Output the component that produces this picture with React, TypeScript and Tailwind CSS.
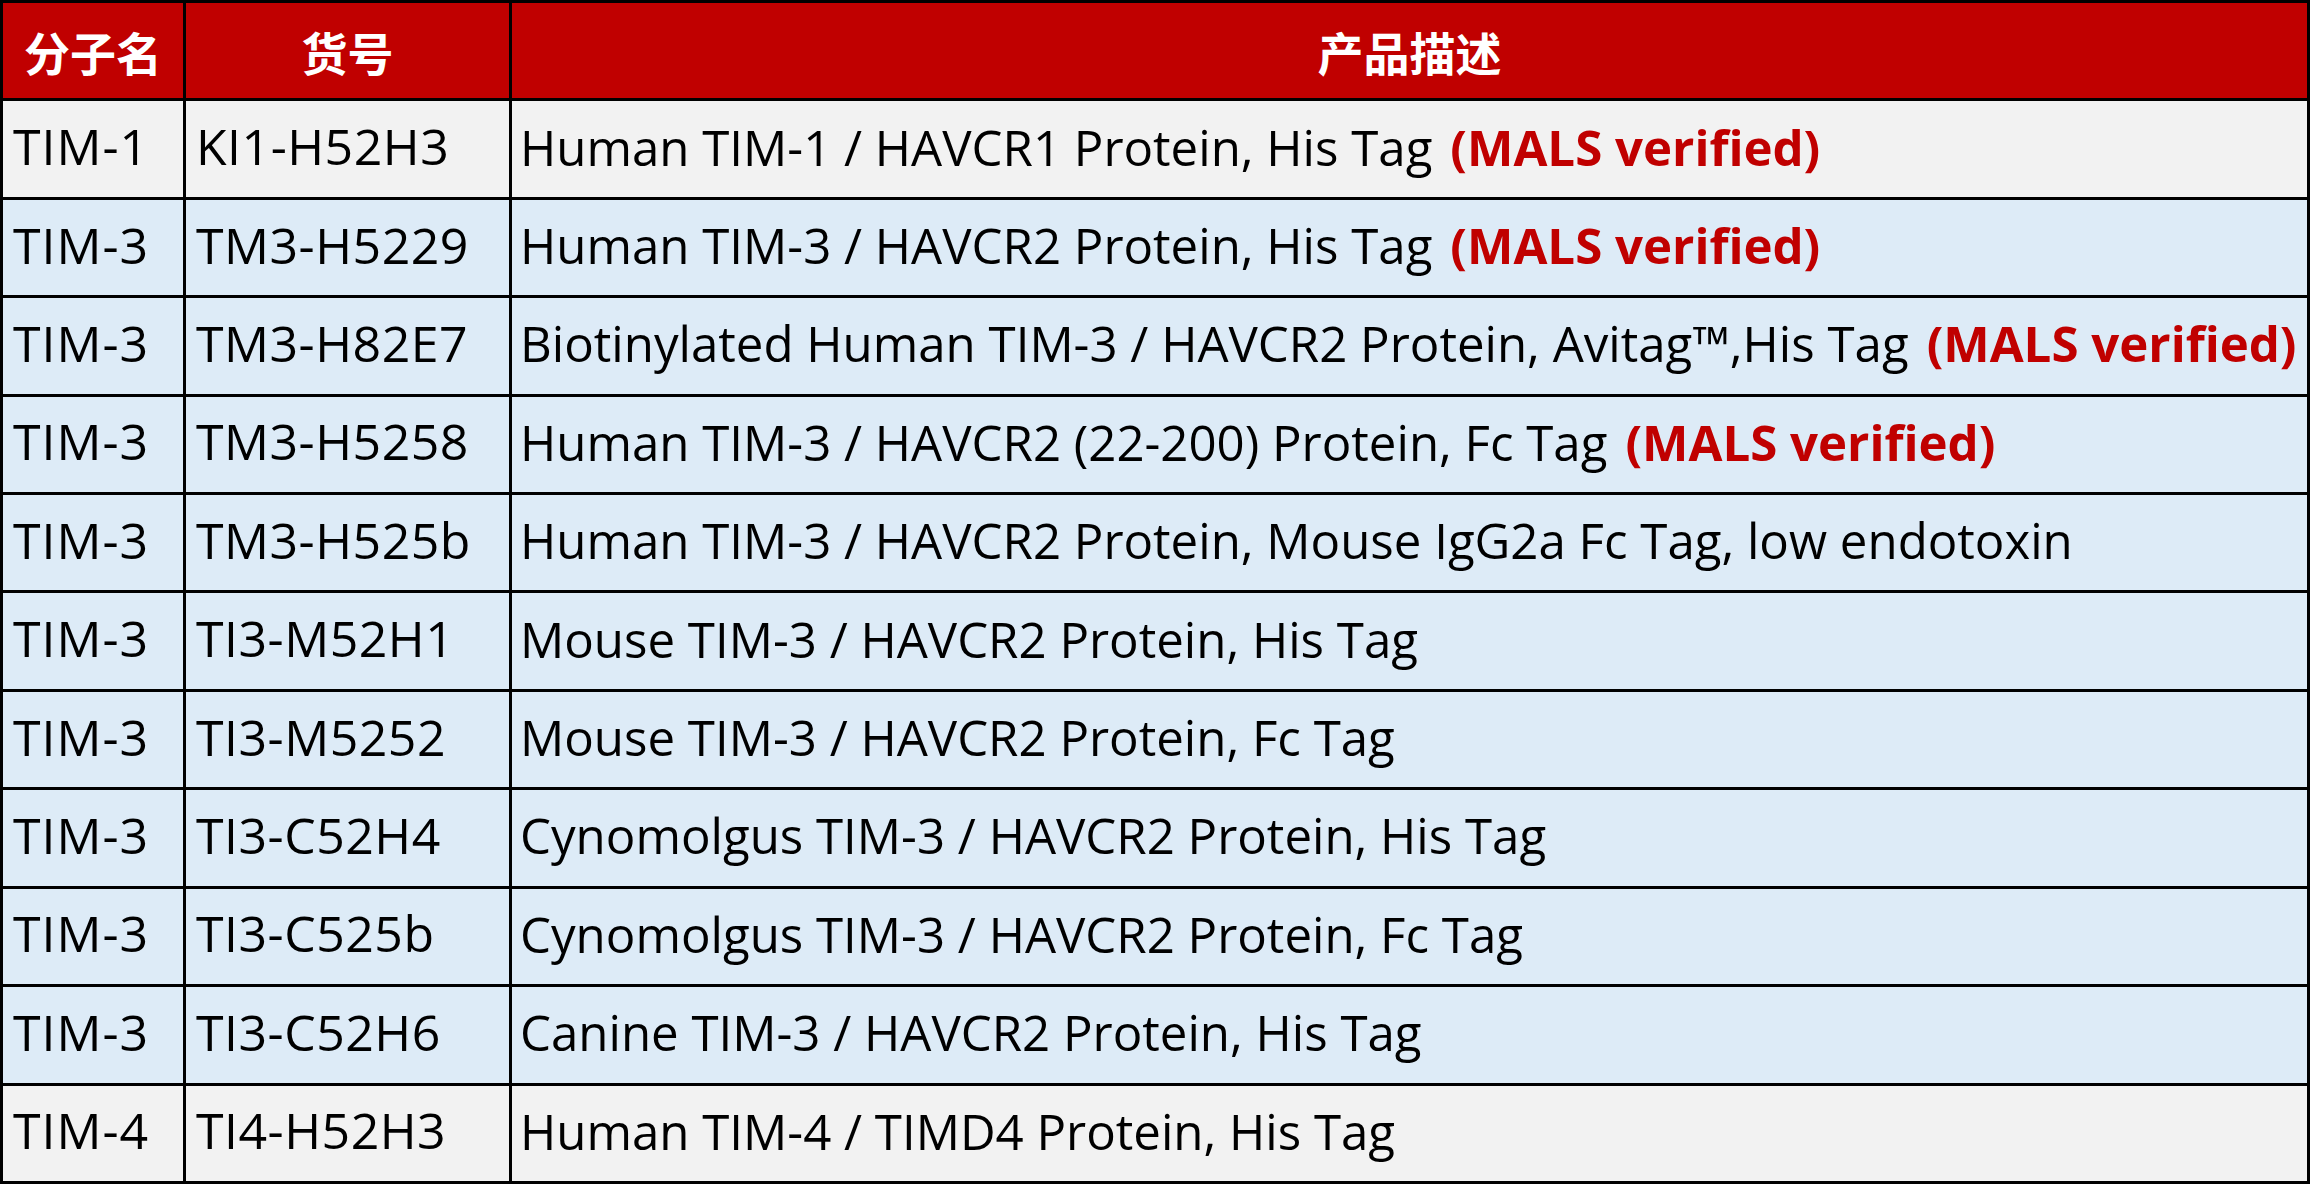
const rows: { name: string; sku: string; desc: string; mals?: boolean; gray?: boolean }[] = [
  { name: "TIM-1", sku: "KI1-H52H3", desc: "Human TIM-1 / HAVCR1 Protein, His Tag", mals: true, gray: true },
  { name: "TIM-3", sku: "TM3-H5229", desc: "Human TIM-3 / HAVCR2 Protein, His Tag", mals: true },
  { name: "TIM-3", sku: "TM3-H82E7", desc: "Biotinylated Human TIM-3 / HAVCR2 Protein, Avitag™,His Tag", mals: true },
  { name: "TIM-3", sku: "TM3-H5258", desc: "Human TIM-3 / HAVCR2 (22-200) Protein, Fc Tag", mals: true },
  { name: "TIM-3", sku: "TM3-H525b", desc: "Human TIM-3 / HAVCR2 Protein, Mouse IgG2a Fc Tag, low endotoxin" },
  { name: "TIM-3", sku: "TI3-M52H1", desc: "Mouse TIM-3 / HAVCR2 Protein, His Tag" },
  { name: "TIM-3", sku: "TI3-M5252", desc: "Mouse TIM-3 / HAVCR2 Protein, Fc Tag" },
  { name: "TIM-3", sku: "TI3-C52H4", desc: "Cynomolgus TIM-3 / HAVCR2 Protein, His Tag" },
  { name: "TIM-3", sku: "TI3-C525b", desc: "Cynomolgus TIM-3 / HAVCR2 Protein, Fc Tag" },
  { name: "TIM-3", sku: "TI3-C52H6", desc: "Canine TIM-3 / HAVCR2 Protein, His Tag" },
  { name: "TIM-4", sku: "TI4-H52H3", desc: "Human TIM-4 / TIMD4 Protein, His Tag", gray: true },
];

export default function App() {
  return (
    <div className="w-[2310px] h-[1184px] bg-black p-[3px] grid grid-cols-[180px_323px_1fr] grid-rows-12 gap-[3px] font-['Open_Sans','Noto_Sans_CJK_SC',sans-serif] text-black leading-none">
      {/* header */}
      <div className="bg-[#c00000] flex items-center justify-center text-white font-bold text-[46px] font-['Noto_Sans_CJK_SC',sans-serif]">
        分子名
      </div>
      <div className="bg-[#c00000] flex items-center justify-center text-white font-bold text-[46px] font-['Noto_Sans_CJK_SC',sans-serif]">
        货号
      </div>
      <div className="bg-[#c00000] flex items-center justify-center text-white font-bold text-[46px] font-['Noto_Sans_CJK_SC',sans-serif]">
        产品描述
      </div>

      {rows.map((r, i) => {
        const bg = r.gray ? "bg-[#f2f2f2]" : "bg-[#ddebf7]";
        return [
          <div key={i + "a"} className={`${bg} flex items-center pl-[10px] pb-[6px] whitespace-nowrap text-[50px] tracking-[1px]`}>
            {r.name}
          </div>,
          <div key={i + "b"} className={`${bg} flex items-center pl-[10px] pb-[6px] whitespace-nowrap text-[50px] tracking-[0.5px]`}>
            {r.sku}
          </div>,
          <div key={i + "c"} className={`${bg} flex items-center pl-[8px] pb-[6px] whitespace-nowrap text-[49.2px]`}>
            <span>{r.desc}</span>
            {r.mals && <span className="ml-[18px] text-[#c00000] font-bold">(MALS verified)</span>}
          </div>,
        ];
      })}
    </div>
  );
}
